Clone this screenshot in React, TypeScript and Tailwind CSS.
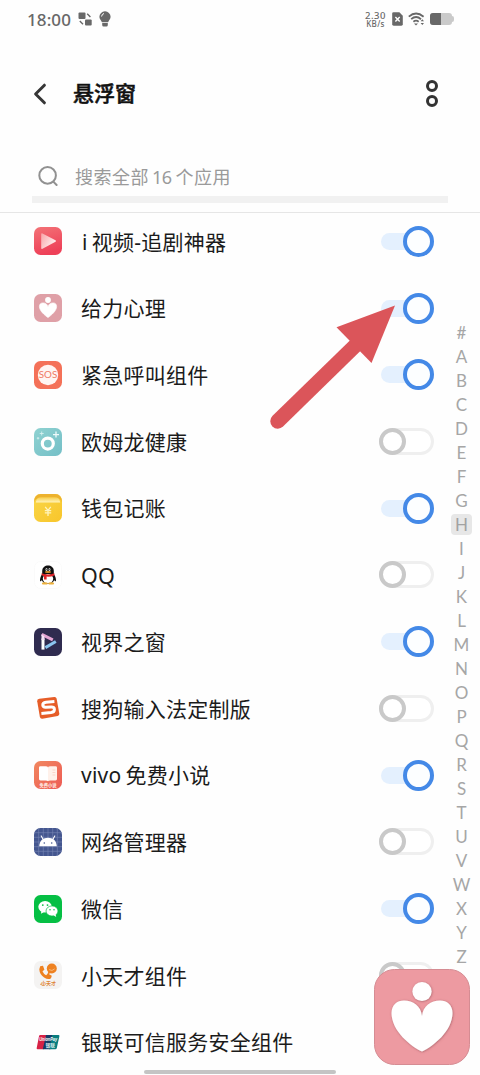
import React from 'react';

interface AppItem {
  name: React.ReactNode;
  icon: React.ReactNode;
  enabled: boolean;
}

const LETTERS = '#ABCDEFGHIJKLMNOPQRSTUVWXYZ'.split('');

const HEART = 'M14 23.6C11 21.4 5.4 17 5.4 12.5C5.4 10 7 8.9 9 8.9C11.4 8.9 13.5 10.2 14 13C14.5 10.2 16.6 8.9 19 8.9C21 8.9 22.6 10 22.6 12.5C22.6 17 17 21.4 14 23.6Z';

const Icon: React.FC<{ children: React.ReactNode }> = ({ children }) => (
  <svg viewBox="0 0 28 28" className="h-7 w-7 shrink-0">
    {children}
  </svg>
);

const VideoIcon = () => (
  <Icon>
    <defs>
      <linearGradient id="video" x1="0" y1="0" x2="0.3" y2="1">
        <stop stopColor="#f37377" />
        <stop offset="1" stopColor="#ee4058" />
      </linearGradient>
      <linearGradient id="videoPlay" x1="0" y1="0" x2="1" y2="0.6">
        <stop stopColor="#f9a5a8" />
        <stop offset="1" stopColor="#fff1f1" />
      </linearGradient>
    </defs>
    <rect width="28" height="28" rx="6.5" fill="url(#video)" />
    <path d="M7.2 7.1Q7.2 5.8 8.5 6.4L21.5 13.2Q22.6 14 21.5 14.7L8.5 21.8Q7.2 22.4 7.2 21Z" fill="url(#videoPlay)" />
  </Icon>
);

const HeartIcon = () => (
  <Icon>
    <rect width="28" height="28" rx="6.5" fill="#dfa0a7" />
    <circle cx="14" cy="6" r="2.9" fill="#fff" />
    <path d={HEART} fill="#fff" stroke="#fff" strokeWidth="0.6" />
  </Icon>
);

const SosIcon = () => (
  <Icon>
    <rect width="28" height="28" rx="6.5" fill="#f47158" />
    <circle cx="14" cy="14" r="10.2" fill="#fff5f2" />
    <text x="14" y="17.2" textAnchor="middle" fontSize="9" fontWeight="400" fontFamily="Lato, sans-serif" fill="#ef7a66" textLength="18.5" lengthAdjust="spacingAndGlyphs">SOS</text>
  </Icon>
);

const OmronIcon = () => (
  <Icon>
    <defs>
      <linearGradient id="omron" x1="0" y1="0" x2="1" y2="1">
        <stop stopColor="#8fd2d1" />
        <stop offset="1" stopColor="#74bfc7" />
      </linearGradient>
    </defs>
    <rect width="28" height="28" rx="6.5" fill="url(#omron)" />
    <circle cx="13.8" cy="15.6" r="5.5" fill="none" stroke="#fff" strokeWidth="3.2" />
    <path d="M22 3.6v6M19 6.6h6" stroke="#eefafa" strokeWidth="1.3" />
    <path d="M7.7 3.5v4M5.7 5.5h4M4 9v2.5M2.8 10.2h2.5" stroke="#d7f0ef" strokeWidth="0.9" />
  </Icon>
);

const WalletIcon = () => (
  <Icon>
    <defs>
      <linearGradient id="wallet" x1="0" y1="0" x2="1" y2="1">
        <stop stopColor="#f9d649" />
        <stop offset="1" stopColor="#f8c52a" />
      </linearGradient>
      <linearGradient id="walletFlap" x1="0" y1="0" x2="0" y2="1">
        <stop stopColor="#f8cd48" />
        <stop offset="1" stopColor="#fff3ba" />
      </linearGradient>
    </defs>
    <rect width="28" height="28" rx="6.5" fill="url(#wallet)" />
    <path d="M0.2 8.5Q0 0 7 0H21Q28 0 27.8 8.5Q27 4 21.5 4H6.5Q1 4 0.2 8.5Z" fill="#edb22e" />
    <path d="M1.8 8.4Q2.6 3.2 7 3.2H21Q25.4 3.2 26.2 8.4Z" fill="url(#walletFlap)" />
    <path d="M11.2 12.8l2.8 3.6 2.8-3.6M10.8 16.6h6.4M10.8 18.8h6.4M14 16.4V22" fill="none" stroke="#fff4bd" strokeWidth="1.3" />
  </Icon>
);

const QqIcon = () => (
  <Icon>
    <rect x="0.5" y="0.5" width="27" height="27" rx="6" fill="#fff" stroke="#fafafa" />
    <path d="M9 12Q5.6 16 6 20.4L9 18.5H19L22 20.4Q22.4 16 19 12Z" fill="#111" />
    <ellipse cx="14" cy="17" rx="6.8" ry="6" fill="#111" />
    <path d="M8.2 13.5V10C8.2 2.6 19.8 2.6 19.8 10V13.5Z" fill="#111" />
    <ellipse cx="14" cy="17.8" rx="5.2" ry="4.8" fill="#fff" />
    <ellipse cx="10.8" cy="22.4" rx="3" ry="1.2" fill="#edb13c" />
    <ellipse cx="17.2" cy="22.4" rx="3" ry="1.2" fill="#edb13c" />
    <ellipse cx="12.5" cy="8.4" rx="1" ry="1.5" fill="#ddd" />
    <ellipse cx="15.5" cy="8.4" rx="1" ry="1.5" fill="#ddd" />
    <circle cx="12.8" cy="8.6" r="0.5" fill="#111" />
    <circle cx="15.2" cy="8.6" r="0.5" fill="#111" />
    <ellipse cx="14" cy="11" rx="3.2" ry="0.9" fill="#d9922b" />
    <path d="M7.6 12.2Q14 14.6 20.4 12.2V14.4Q16 16.2 12.6 15.6V18.6H10V15L7.6 14.2Z" fill="#df2127" />
  </Icon>
);

const WindowIcon = () => (
  <Icon>
    <rect width="28" height="28" rx="6.5" fill="#2f2b4f" />
    <path d="M9 10.5V21.6" stroke="#fff" strokeWidth="3" />
    <path d="M7.8 6.4L18.8 11.8" stroke="#e5a5d4" strokeWidth="3" />
    <path d="M11.4 19.6L21.8 13.5" stroke="#8bc5ef" strokeWidth="3" />
    <path d="M7.5 6L10.5 8.5V12H7.5Z" fill="#f4e1f5" />
  </Icon>
);

const SogouIcon = () => (
  <Icon>
    <path d="M5.3 4.7L20.3 2.9Q22.2 2.7 22.6 4.5L25.3 19.6Q25.6 21.5 23.7 22L8.4 24.7Q6.4 25 5.9 23.1L3.2 7.2Q2.9 5.1 5.3 4.7Z" fill="#e65d28" />
    <path d="M20.4 7.6L12 8.3Q8.6 8.7 8.8 11.1Q9 13.4 12 13.2L17.2 12.9Q20.4 12.8 20.4 15.5Q20.4 18.2 17 18.6L7.4 19.5" fill="none" stroke="#fff" strokeWidth="3" />
  </Icon>
);

const NovelIcon = () => (
  <Icon>
    <defs>
      <linearGradient id="novel" x1="0" y1="0" x2="1" y2="1">
        <stop stopColor="#f18860" />
        <stop offset="1" stopColor="#ed5a54" />
      </linearGradient>
    </defs>
    <rect width="28" height="28" rx="6.5" fill="url(#novel)" />
    <path d="M5 6.5Q5 5.2 6.4 5.2H11.5Q14 5.2 14 6.4V20.2Q13.5 19.4 11.5 19.4H6.4Q5 19.4 5 18.1Z" fill="#fff" />
    <path d="M14 6.4Q14 5.2 16.5 5.2H21.6Q23 5.2 23 6.5V18.1Q23 19.4 21.6 19.4H16.5Q14.5 19.4 14 20.2Z" fill="#fff1ea" />
    <path d="M18.5 9h2.8M18.5 11.5h2.8M18.5 14h2.8" stroke="#f7c4b3" strokeWidth="0.6" />
    <text x="14" y="25.8" textAnchor="middle" fontSize="4.3" fontWeight="700" fontFamily="Noto Sans CJK SC, sans-serif" fill="#fff0ea">免费小说</text>
  </Icon>
);

const AndroidIcon = () => (
  <Icon>
    <rect width="28" height="28" rx="6.5" fill="#44568f" />
    <path d="M4.7 0V28M9.3 0V28M14 0V28M18.7 0V28M23.3 0V28M0 4.7H28M0 9.3H28M0 14H28M0 18.7H28M0 23.3H28" stroke="#7887b5" strokeWidth="0.6" />
    <path d="M5.2 18.2C5.5 12.5 9.2 9.8 14 9.8S22.5 12.5 22.8 18.2Z" fill="#fff" />
    <path d="M7.2 7.9L9.4 11.8M20.8 7.9L18.6 11.8" stroke="#fff" strokeWidth="1.1" strokeLinecap="round" />
    <circle cx="10.3" cy="15" r="0.8" fill="#44568f" />
    <circle cx="17.7" cy="15" r="0.8" fill="#44568f" />
  </Icon>
);

const WechatIcon = () => (
  <Icon>
    <rect width="28" height="28" rx="6.5" fill="#05bf44" />
    <path d="M7.4 16L6.9 18.8L9.7 17.2Z" fill="#fff" />
    <ellipse cx="11.1" cy="11.8" rx="6.8" ry="5.8" fill="#fff" />
    <circle cx="8.8" cy="10.1" r="0.9" fill="#05bf44" />
    <circle cx="13.5" cy="10.1" r="0.9" fill="#05bf44" />
    <ellipse cx="18" cy="16" rx="6" ry="5.1" fill="#fff" stroke="#05bf44" strokeWidth="0.7" />
    <path d="M19.2 20L22.2 21.9L21.5 18.8Z" fill="#fff" />
    <circle cx="16" cy="14.7" r="0.75" fill="#05bf44" />
    <circle cx="20" cy="14.7" r="0.75" fill="#05bf44" />
  </Icon>
);

const XtcIcon = () => (
  <Icon>
    <rect width="28" height="28" rx="6.5" fill="#f4f3f2" />
    <path d="M6.2 5.2L9 4.8L10.4 8.8L8.5 10.3Q9.6 13.1 12.1 14.2L14 12.6L17.8 14.8L17 17.2Q14.3 19.2 10.1 16.5Q5.5 13.2 5.3 8.2Z" fill="#ee8120" />
    <circle cx="17.8" cy="7.5" r="5" fill="#ee8120" />
    <path d="M14.5 10L13.4 13.5L17.5 11.8Z" fill="#ee8120" />
    <path d="M15.1 8.6Q18 10.7 20.6 7.9" stroke="#f8c58f" strokeWidth="0.8" fill="none" />
    <text x="14.5" y="23.7" textAnchor="middle" fontSize="5" fontWeight="700" fontFamily="Noto Sans CJK SC, sans-serif" fill="#df8637">小天才</text>
    <path d="M6 23Q8 24.8 11 24.3" fill="none" stroke="#df8637" strokeWidth="0.7" />
  </Icon>
);

const UnionPayIcon = () => (
  <Icon>
    <path d="M6.2 7H13L9.8 21.3H3.6Q2.4 21.3 2.7 20L5 8.2Q5.2 7 6.2 7Z" fill="#d72245" />
    <path d="M12 7H19.5L16.3 21.3H8.8Z" fill="#163c66" />
    <path d="M18.2 7H24.5Q25.7 7 25.4 8.2L22.8 20Q22.5 21.3 21.3 21.3H15.2Z" fill="#087d7f" />
    <text x="14.2" y="13.4" textAnchor="middle" fontSize="4.6" fontStyle="italic" fontWeight="700" fontFamily="Liberation Sans, sans-serif" fill="#fff" textLength="18" lengthAdjust="spacingAndGlyphs">UnionPay</text>
    <text x="16.3" y="19" textAnchor="middle" fontSize="4.4" fontWeight="700" fontFamily="Noto Sans CJK SC, sans-serif" fill="#d7eeee" textLength="9.6" lengthAdjust="spacingAndGlyphs">银联</text>
  </Icon>
);

const apps: AppItem[] = [
  { name: <><span className="mr-[4px] ml-[1px]">i</span>视频-追剧神器</>, icon: <VideoIcon />, enabled: true },
  { name: '给力心理', icon: <HeartIcon />, enabled: true },
  { name: '紧急呼叫组件', icon: <SosIcon />, enabled: true },
  { name: '欧姆龙健康', icon: <OmronIcon />, enabled: false },
  { name: '钱包记账', icon: <WalletIcon />, enabled: true },
  { name: <span className="text-[21.5px]">QQ</span>, icon: <QqIcon />, enabled: false },
  { name: '视界之窗', icon: <WindowIcon />, enabled: true },
  { name: '搜狗输入法定制版', icon: <SogouIcon />, enabled: false },
  { name: <><span className="mr-[4px]">vivo</span>免费小说</>, icon: <NovelIcon />, enabled: true },
  { name: '网络管理器', icon: <AndroidIcon />, enabled: false },
  { name: '微信', icon: <WechatIcon />, enabled: true },
  { name: '小天才组件', icon: <XtcIcon />, enabled: false },
  { name: '银联可信服务安全组件', icon: <UnionPayIcon />, enabled: true },
];

const Toggle: React.FC<{ enabled: boolean }> = ({ enabled }) =>
  enabled ? (
    <span role="switch" aria-checked="true" className="flex h-[17px] w-[53px] shrink-0 items-center justify-end rounded-full bg-linear-to-r from-[#e4f0fe] from-50% to-white to-50%">
      <span className="h-[31px] w-[31px] shrink-0 rounded-full border-4 border-[#4489e7] bg-[#fcfeff]" />
    </span>
  ) : (
    <span role="switch" aria-checked="false" className="flex h-[27px] w-[55px] shrink-0 items-center rounded-full bg-white shadow-[inset_0_0_0_3px_#efefef]">
      <span className="h-[27px] w-[27px] rounded-full border-4 border-[#c9c9c9] bg-white" />
    </span>
  );

const StatusBar = () => (
  <div className="flex h-[38px] items-center justify-between pr-[26px] pl-[27px] text-[#686868]">
    <div className="flex items-center">
      <span className="w-[51px] text-[17px] leading-none font-medium tracking-[0.1px]">18:00</span>
      <svg viewBox="0 0 14 14" className="h-[14px] w-[14px]" fill="currentColor">
        <rect x="0.5" y="0.5" width="7" height="6.5" rx="1" />
        <rect x="7" y="7.5" width="6.7" height="6" rx="1" />
        <path d="M9.2 1.8L12.4 5M1.8 9L5 12.2" stroke="currentColor" strokeWidth="1.4" />
      </svg>
      <svg viewBox="0 0 12 16" className="ml-[7px] h-4 w-3" fill="currentColor">
        <path d="M6 .3A5.5 5.5 0 0 0 .4 5.8C.4 8.2 2 9.2 2.9 11.3H9.1C10 9.2 11.6 8.2 11.6 5.8A5.5 5.5 0 0 0 6 .3ZM3.2 12H8.8V14Q8.8 15.5 7.4 15.5H4.6Q3.2 15.5 3.2 14Z" />
        <path d="M2.6 5.5Q2.8 3 5 2.5" fill="none" stroke="#fff" strokeWidth="1" />
      </svg>
    </div>
    <div className="flex items-center">
      <div className="flex w-[23px] flex-col items-center font-medium">
        <span className="text-[9.5px] leading-[9px] tracking-[0.5px]">2.30</span>
        <span className="text-[8px] leading-[8px] tracking-[0.3px]">KB/s</span>
      </div>
      <svg viewBox="0 0 11 14" className="ml-[5px] h-[14px] w-[11px]">
        <path d="M1.5.3H7.4L10.8 3.8V12.3Q10.8 13.7 9.4 13.7H1.6Q.2 13.7 .2 12.3V1.6Q.2.3 1.5.3Z" fill="currentColor" />
        <path d="M3.4 5L7.7 9.5M7.7 5L3.4 9.5" stroke="#fff" strokeWidth="1.4" />
      </svg>
      <svg viewBox="0 0 17 14" className="ml-[5px] h-[14px] w-[17px]" fill="none" stroke="currentColor" strokeWidth="1.8">
        <path d="M.8 4.7Q8 -1.7 15.6 4.7M3.2 7.2Q8 2.9 13 7.2M5.4 9.7Q8 7.5 10.7 9.7" />
        <path d="M6 11.5H10L8 13.5Z" fill="currentColor" stroke="none" />
        <path d="M14.3 7.2L16 9.3H12.6ZM14.3 13.1L12.6 11H16Z" fill="currentColor" stroke="none" />
      </svg>
      <div className="ml-[5px] flex h-3 w-[22px] overflow-hidden rounded-[3px] bg-[#cacaca]">
        <div className="w-[11px] bg-[#686868]" />
      </div>
      <div className="h-1.5 w-[2px] rounded-r-sm bg-[#cacaca]" />
    </div>
  </div>
);

export default function App() {
  return (
    <div className="relative flex h-[1075px] w-[480px] flex-col overflow-hidden bg-[#fefefe] font-['Noto_Sans','Noto_Sans_CJK_SC',sans-serif] text-[#1b1b1b]">
      <StatusBar />

      <header className="flex h-[112px] items-center px-8">
        <svg viewBox="0 0 16 22" className="h-[22px] w-4" fill="none" stroke="#363636" strokeWidth="3" strokeLinecap="round" strokeLinejoin="round">
          <path d="M12.4 2.2L3.6 11L12.4 19.8" />
        </svg>
        <h1 className="ml-[25px] pb-[3px] font-['Noto_Sans_CJK_SC',sans-serif] text-[21px] leading-none font-medium text-[#111] [-webkit-text-stroke:0.5px_#111]">悬浮窗</h1>
        <button className="mr-[10px] mb-[2px] ml-auto flex flex-col gap-[3px]">
          <span className="h-3 w-3 rounded-full border-[3.5px] border-[#333]" />
          <span className="h-3 w-3 rounded-full border-[3.5px] border-[#333]" />
        </button>
      </header>

      {/* Search */}
      <div className="mx-8 flex h-[53px] items-center border-b-[7px] border-[#f1f1f1] pt-2 pl-[6px] text-[#9a9a9a]">
        <svg viewBox="0 0 20 20" className="-mt-[2px] h-5 w-5" fill="none" stroke="#919191" strokeWidth="2">
          <circle cx="9.6" cy="9.4" r="8.3" />
          <path d="M15.3 15.6L18.6 19" strokeLinecap="round" />
        </svg>
        <span className="ml-[17px] text-[18px] leading-none tracking-[0.5px] whitespace-nowrap">
          搜索全部<span className="mr-[4px] ml-[3px] text-[18px] tracking-[-0.6px]">16</span>个应用
        </span>
      </div>

      <div className="mt-[9px] flex h-[863px] overflow-hidden border-t border-[#e6e6e6]">
        <ul className="-mt-[5px] w-[434px] shrink-0">
          {apps.map((app, i) => (
            <li key={i} className="flex h-[66.72px] items-center pl-[34px]">
              {app.icon}
              <span className="ml-[19px] flex-1 pt-[1.5px] text-[21px] leading-none tracking-[0.25px] whitespace-nowrap">{app.name}</span>
              <Toggle enabled={app.enabled} />
            </li>
          ))}
        </ul>
        <nav className="ml-[17px] flex w-[21px] flex-col pt-[107px] font-['Lato',sans-serif]">
          {LETTERS.map((letter) => (
            <span key={letter} className="flex h-6 shrink-0 items-center justify-center">
              <span className={letter === 'H' ? 'flex h-[21px] w-[21px] items-center justify-center rounded-[4px] bg-[#e7e7e7] text-[17px] leading-none text-[#a2a2a2]' : 'text-[17px] leading-none text-[#a6a6a6]'}>
                {letter}
              </span>
            </span>
          ))}
        </nav>
      </div>

      {/* Pointer arrow over the second switch */}
      <svg viewBox="0 0 126 124" className="absolute top-[305px] left-[270px] h-[124px] w-[126px]">
        <path d="M7.8 116.2L90 36" stroke="#db555a" strokeWidth="15" strokeLinecap="round" />
        <path d="M125 0.5L66.5 22.2L101.5 58Z" fill="#db555a" />
      </svg>

      {/* Floating button */}
      <svg viewBox="0 0 96 96" className="absolute top-[969px] left-[374px] h-24 w-24">
        <defs>
          <filter id="soft" x="-20%" y="-20%" width="140%" height="140%">
            <feDropShadow dx="0.5" dy="0.5" stdDeviation="0.9" floodColor="#8f4e55" floodOpacity="0.7" />
          </filter>
        </defs>
        <rect x="0.5" y="0.5" width="95" height="95" rx="20" fill="#ed9aa1" stroke="#d58c93" />
        <g fill="#fff" filter="url(#soft)">
          <circle cx="48" cy="22.5" r="9.6" />
          <path d="M48 82.5C37 77.5 17.5 62 17.5 44C17.5 36 23 31.5 30 31.5C39 31.5 47 37 48 47C49 37 57 31.5 66 31.5C73 31.5 78.5 36 78.5 44C78.5 62 59 77.5 48 82.5Z" />
        </g>
      </svg>

      <div className="absolute bottom-[1px] left-[144px] h-1 w-[192px] rounded-full bg-[#c4c4c4]" />
    </div>
  );
}
